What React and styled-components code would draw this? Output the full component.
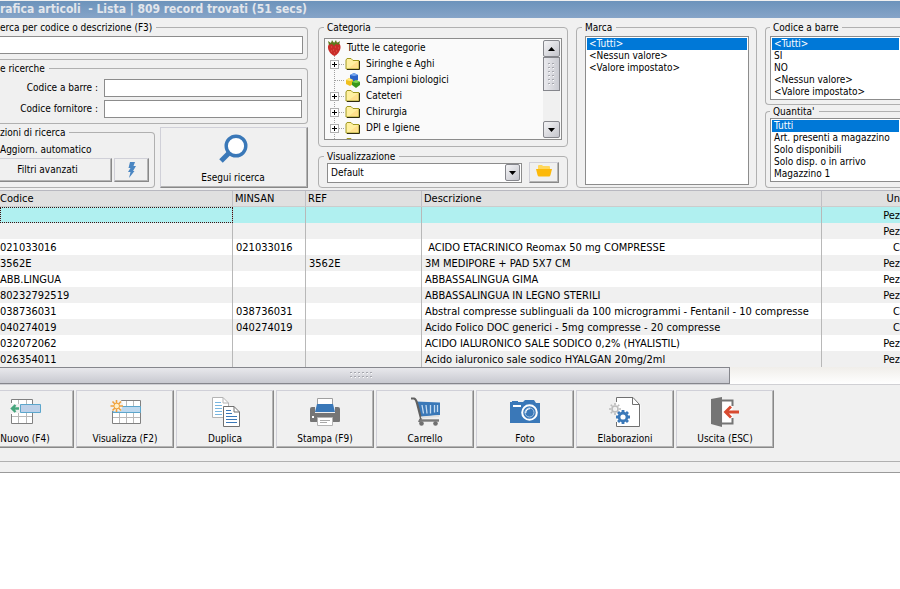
import styled, { createGlobalStyle } from 'styled-components'

const GlobalStyle = createGlobalStyle`
    * {
        box-sizing: border-box;
    }

    body {
        margin: 0;
        background-color: #ffffff;
        color: #000000;
        font-family: Tahoma, 'DejaVu Sans Condensed', 'DejaVu Sans', sans-serif;
        font-size: 10px;
        line-height: 14px;
    }

    button, input, select {
        margin: 0;
        font: inherit;
        color: inherit;
        border-radius: 0;
    }

    svg {
        display: block;
        flex: none;
    }
`

const Window = styled.div`
    overflow: hidden;
    background-color: #f0f0f0;
    border-bottom: 1px solid #9a9a9a;
    white-space: nowrap;
`

const TitleBar = styled.h1`
    margin: 1px 0 0;
    height: 17px;
    background: linear-gradient(#6c93bb, #86a4c8);
    color: #e2e6ec;
    font-size: 12px;
    font-weight: bold;
    line-height: 16px;
    white-space: pre;
`

const Filters = styled.div`
    display: flex;
    gap: 8px;
    padding: 4px 0 2px;
`

const Column = styled.div`
    display: flex;
    flex-direction: column;
    justify-content: space-between;
    flex: ${({ $width }) => ($width ? `0 0 ${$width}px` : '1 1 0')};
    min-width: 0;
`

const SearchColumn = styled(Column)`
    padding-right: 2px;
`

const Group = styled.fieldset`
    margin: 0;
    min-width: 0;
    padding: ${({ $pad }) => $pad};
    border: 1px solid #b0b0b0;
    border-left-width: ${({ $open }) => ($open === 'left' ? 0 : '1px')};
    border-right-width: ${({ $open }) => ($open === 'right' ? 0 : '1px')};
    border-radius: ${({ $open }) => ({ left: '0 4px 4px 0', right: '4px 0 0 4px' })[$open] || '4px'};
`

const Legend = styled.legend`
    padding: 0 4px 0 ${({ $flush }) => ($flush ? 0 : '3px')};
    line-height: 11px;
`

const Inset = styled.div`
    padding: 0 3px;
`

const TextInput = styled.input`
    display: block;
    flex: 1;
    width: 100%;
    min-width: 0;
    height: 18px;
    padding: 0 4px;
    border: 1px solid #8c8c8c;
    border-left-width: ${({ $open }) => ($open ? 0 : '1px')};
    background-color: #ffffff;
    outline: none;
`

const Field = styled.div`
    display: flex;
    align-items: center;

    & + & {
        margin-top: 3px;
    }
`

const FieldLabel = styled.label`
    width: 104px;
    padding-right: 6px;
    text-align: right;
`

const SearchRow = styled.div`
    display: flex;
    gap: 5px;
`

const Options = styled.div`
    flex: 0 0 155px;
`

const OptionText = styled.div`
    height: 15px;
`

const Button = styled.button`
    display: flex;
    align-items: center;
    justify-content: center;
    padding: 0;
    border: 1px solid;
    border-color: #d0d0d8 #888888 #888888 #d0d0d8;
    box-shadow: inset -1px -1px #b4b4b4;
    background-color: #f0f0f0;
`

const OptionButtons = styled.div`
    display: flex;
    gap: 2px;
`

const FilterButton = styled(Button)`
    width: ${({ $width }) => $width}px;
    height: 24px;
    padding-right: ${({ $shift }) => ($shift ? '16px' : 0)};
    border-left-width: ${({ $shift }) => ($shift ? 0 : '1px')};
`

const SearchButton = styled(Button)`
    flex: 1;
    flex-direction: column;
    justify-content: space-between;
    padding: 6px 2px 2px 0;
`

const Tree = styled.div`
    display: flex;
    height: 102px;
    padding: 1px;
    border: 1px solid #8c8c8c;
    background-color: #fafafa;
    overflow: hidden;
`

const TreeList = styled.ul`
    flex: 1;
    margin: 0;
    padding: 0;
    list-style: none;
`

const TreeItem = styled.li`
    display: flex;
    align-items: center;
    height: 16px;
    padding-left: ${({ $root }) => ($root ? '1px' : 0)};
`

const TreeText = styled.span`
    margin-left: 5px;
    line-height: 16px;
`

const ScrollBar = styled.div`
    display: flex;
    flex-direction: column;
    width: 17px;
    background-color: #f0f0f0;
`

const ScrollButton = styled.button`
    display: flex;
    align-items: center;
    justify-content: center;
    width: ${({ $width }) => $width || 17}px;
    height: 17px;
    padding: 0;
    border: 1px solid #85868c;
    border-radius: 2px;
    background: linear-gradient(135deg, #f4f4f6, #c4c5cc);
`

const ScrollThumb = styled.div`
    display: flex;
    align-items: center;
    justify-content: center;
    height: 34px;
    margin-bottom: auto;
    border: 1px solid #85868c;
    background: linear-gradient(90deg, #eaeaee, #cacbd2);
`

const ViewRow = styled.div`
    display: flex;
    align-items: center;
    gap: 7px;
`

const Combo = styled.div`
    display: flex;
    align-items: center;
    flex: 1;
    height: 20px;
    padding-right: 1px;
    border: 1px solid #8c8c8c;
    background-color: #ffffff;
`

const ComboSelect = styled.select`
    flex: 1;
    appearance: none;
    height: 18px;
    padding: 0 3px;
    border: 0;
    background-color: transparent;
    outline: none;
`

const FolderButton = styled(Button)`
    width: 30px;
    height: 21px;
`

const ListBox = styled.select`
    display: block;
    width: 100%;
    height: ${({ $height }) => $height}px;
    padding: 1px;
    border: 1px solid #8c8c8c;
    border-right-width: ${({ $open }) => ($open ? 0 : '1px')};
    background-color: #ffffff;
    outline: none;
    overflow: hidden;

    & option {
        height: 12px;
        min-height: 12px;
        padding: 0 2px;
        line-height: 12px;
    }

    & option:checked {
        background: linear-gradient(#0078d7, #0078d7);
        -webkit-text-fill-color: #ffffff;
    }
`

const Grid = styled.table`
    width: 100%;
    table-layout: fixed;
    border-collapse: separate;
    border-spacing: 0;
    border-top: 1px solid #b8b8c0;
    font-size: 11px;
`

const HeadCell = styled.th`
    height: 16px;
    padding: 1px 0 0 ${({ $first }) => ($first ? 0 : '2px')};
    border-right: 1px solid #c0c0c4;
    border-bottom: 1px solid #cccccc;
    background-color: #e0e0e0;
    font-weight: normal;
    line-height: 14px;
    text-align: left;

    &:last-child {
        border-right: 0;
        text-align: right;
    }
`

const Row = styled.tr`
    background-color: ${({ $selected }) => ($selected ? '#b0f0f0' : '#ffffff')};

    &:nth-child(even) {
        background-color: #f0f0f0;
    }
`

const Cell = styled.td`
    height: 16px;
    padding: 2px 0 0 ${({ $first }) => ($first ? 0 : '3px')};
    border-right: 1px solid #b8b8b8;
    line-height: 14px;
    white-space: pre;
    overflow: hidden;
    outline: ${({ $focused }) => ($focused ? '1px dotted #401010' : 'none')};
    outline-offset: -1px;

    &:last-child {
        border-right: 0;
        text-align: right;
    }
`

const HorizontalScroll = styled.div`
    height: 18px;
    border-bottom: 1px solid #d0d0d4;
    background: linear-gradient(#f0eeea, #ffffff);
`

const HorizontalThumb = styled.div`
    display: flex;
    align-items: center;
    justify-content: center;
    width: 730px;
    height: 17px;
    padding-right: 6px;
    border: 1px solid #85868c;
    border-left: 0;
    background: linear-gradient(#e8e8ec, #c8c9d0);
`

const ToolBar = styled.div`
    display: flex;
    gap: 2px;
    margin-left: -24px;
    padding: 5px 0 13px;
`

const ToolButton = styled(Button)`
    flex: 0 0 98px;
    flex-direction: column;
    justify-content: space-between;
    height: 58px;
    padding: 4px 0 1px;
`

const StatusBar = styled.div`
    height: 11px;
    border-top: 1px solid #b0b0b0;
`

const Magnifier = () => (
    <svg width="30" height="30" viewBox="0 0 30 30">
        <path d="M12 18 3 27" stroke="#3a78b8" strokeWidth="5" />
        <circle cx="18" cy="12" r="9.8" fill="#fff" stroke="#3a78b8" strokeWidth="3.4" />
    </svg>
)

const Bolt = () => (
    <svg width="10" height="16" viewBox="0 0 10 16">
        <path d="M3 0 8 0 6.5 4 9 4 6 9 7.5 9 2 16 3.5 10 1 10 3.5 6 1.5 6Z" fill="#4a86c2" />
    </svg>
)

const Strawberry = () => (
    <svg width="15" height="16" viewBox="0 0 15 16">
        <path d="M7.5 3C11 1.5 14 4 13.5 8 12.8 12 10 15 7.5 16 5 15 1.5 12 1 8 .7 4 4 1.5 7.5 3Z" fill="#c92c28" />
        <path d="M2 5 1 1 4 3 5 0 7 3 9 0 10 3 13 1 12 5 9 4 7 6 5 4Z" fill="#5c7a1c" />
        <path d="M4 7h1M8 7h1M11 8h1M6 10h1M9 11h1M4 11h1M7 13h1" stroke="#e06050" />
    </svg>
)

const Folder = () => (
    <svg width="16" height="14" viewBox="0 0 16 14">
        <path d="M1 12V3L2 1.5H6L8 3.5H14V12Z" fill="#fff0a0" stroke="#a09820" />
        <path d="M4 11 13 4V11Z" fill="#ffe08c" />
        <path d="M2 12.5H14.5V4" fill="none" stroke="#302c10" />
    </svg>
)

const Cubes = () => (
    <svg width="16" height="15" viewBox="0 0 16 15">
        <path d="M5 2 9 0 13 2V7L9 9 5 7Z" fill="#2a62c8" />
        <path d="M5 2 9 0 13 2 9 3Z" fill="#78a8f0" />
        <path d="M1 7 4 5 8 7V11L5 13 1 11Z" fill="#f0c020" />
        <path d="M1 7 4 5 8 7 5 8Z" fill="#ffe880" />
        <path d="M7 9 11 7 15 9V12L11 15 7 12Z" fill="#38961c" />
        <path d="M7 9 11 7 15 9 11 10Z" fill="#80d850" />
    </svg>
)

const Branch = ({ expandable }) => (
    <svg width="19" height="16" viewBox="0 0 19 16">
        <path d="M8.5 0V16M9 8.5H18" stroke="#a0a0a0" strokeDasharray="1 1" />
        {expandable && (
            <>
                <rect x="4.5" y="4.5" width="8" height="8" fill="#fff" stroke="#b0b0b0" />
                <path d="M6 8.5H11M8.5 6V11" stroke="#000" />
            </>
        )}
    </svg>
)

const Arrow = ({ up }) => (
    <svg width="7" height="4" viewBox="0 0 7 4">
        <path d={up ? 'M0 4 3.5 0 7 4Z' : 'M0 0 3.5 4 7 0Z'} />
    </svg>
)

const Grip = ({ columns, rows }) => (
    <svg width={columns * 4 - 1} height={rows * 4 - 1}>
        {Array.from({ length: columns * rows }, (_, i) => {
            const x = (i % columns) * 4
            const y = Math.floor(i / columns) * 4
            return (
                <g key={i}>
                    <rect x={x + 1} y={y + 1} width="1" height="1" fill="#fff" />
                    <rect x={x} y={y} width="2" height="1" fill="#a6a7ae" />
                </g>
            )
        })}
    </svg>
)

const YellowFolder = () => (
    <svg width="16" height="15" viewBox="0 0 16 15">
        <path d="M2 5V1Q2 0 3 0H6L7 1H13Q14 1 14 2V5Z" fill="#ffd75c" />
        <path d="M0 4H16L14.5 10Q14 11.5 13 11.5H3Q2 11.5 1.5 10Z" fill="#fcb90a" />
    </svg>
)

const NewRow = () => (
    <svg width="32" height="32" viewBox="0 0 32 32">
        <path d="M2.5 4.5H24V28.5H2.5Z" fill="#fff" />
        <path d="M9.5 4V29M17.5 4V29M2 21.5H24" stroke="#b8b8b8" />
        <path d="M2.5 8V4.5H23.5V28.5H2.5V19" fill="none" stroke="#808080" />
        <path d="M1 9H12V18H1Z" fill="#f0f0f0" />
        <path d="M10 13.5H4M6.5 10 3 13.5 6.5 17" fill="none" stroke="#45a57c" strokeWidth="2.4" />
        <path d="M11.5 9.5H31.5V17.5H11.5Z" fill="#bdd0e8" stroke="#5ca6cc" />
    </svg>
)

const ViewRowIcon = () => (
    <svg width="32" height="32" viewBox="0 0 32 32">
        <path d="M3.5 5.5H31.5V28.5H3.5Z" fill="#fff" stroke="#808080" />
        <path d="M10.5 6V28M17.5 6V28M24.5 6V28M4 22.5H31" stroke="#b8b8b8" />
        <path d="M4 11.5H31.5V17.5H4Z" fill="#bdd8ee" stroke="#5ca6cc" />
        <path d="M1 5H12L14 9 12 16H3Z" fill="#f0f0f0" />
        <path d="M7.5 5V17M1.5 11H14M3.5 6.5 12 15.5M12 6.5 3.5 15.5" stroke="#f0a23c" strokeWidth="1.6" />
        <circle cx="7.7" cy="11" r="2.8" fill="#fff0c8" stroke="#f0a23c" />
    </svg>
)

const Copy = () => (
    <svg width="32" height="32" viewBox="0 0 32 32">
        <path d="M3.5 2.5H14L19.5 8V22.5H3.5Z" fill="#fff" stroke="#b4b4b4" />
        <path d="M14 2.5V8H19.5" fill="none" stroke="#b4b4b4" />
        <path d="M6 7.5H12M6 10.5H13M6 13.5H13M6 16.5H13M6 19.5H13" stroke="#78b6e0" />
        <path d="M14.5 11.5H25L30.5 17V31.5H14.5Z" fill="#fff" stroke="#707070" />
        <path d="M25 11.5V17H30.5" fill="none" stroke="#707070" />
        <path d="M17 15.5H22M17 18.5H23M17 21.5H28M17 24.5H28M17 27.5H28" stroke="#3a78b8" />
    </svg>
)

const Printer = () => (
    <svg width="32" height="32" viewBox="0 0 32 32">
        <path d="M1 14Q1 12 3 12H6V18H26V12H29Q31 12 31 14V26Q31 27 30 27H2Q1 27 1 26Z" fill="#757575" />
        <path d="M8.5 9V3.5H23.5V9" fill="#fff" stroke="#a0a0a0" />
        <path d="M8 9H24L26 17H6Z" fill="#3a78b8" />
        <path d="M8.5 22.5H23.5V30.5H8.5Z" fill="#fff" stroke="#b4b4b4" />
        <path d="M11 25.5H21M11 27.5H18" stroke="#a8a8a8" />
        <path d="M3 21H5V23H3Z" fill="#fff" />
    </svg>
)

const Cart = () => (
    <svg width="32" height="32" viewBox="0 0 32 32">
        <path d="M7 6.5 31 7.5V20L12 22Z" fill="#3a78b8" />
        <path d="M13 10 14.5 18.5M17 10 18 18.5M21.5 10V18.5M25.5 10V17.5M28.5 10V17" stroke="#c4daf0" strokeWidth="1.3" />
        <path d="M2 3.5H5Q7 4 8 8L12 23.5 10 27" fill="none" stroke="#606060" strokeWidth="2.2" />
        <path d="M12 22.5 30 21" stroke="#e0e0e0" strokeWidth="2" />
        <path d="M10 25.5H30" stroke="#787878" strokeWidth="2.4" />
        <circle cx="12.5" cy="28.5" r="2.3" fill="#707070" />
        <circle cx="26.5" cy="28.5" r="2.3" fill="#707070" />
    </svg>
)

const Camera = () => (
    <svg width="32" height="32" viewBox="0 0 32 32">
        <path d="M1 7H3V6H9V7H14L16 5H25L27 8H31V28H1Z" fill="#3a78b8" />
        <circle cx="20.5" cy="17.5" r="7.3" fill="#3a78b8" stroke="#fff" strokeWidth="2" />
        <path d="M16.5 18A4.2 4.2 0 0 1 21 13.5" fill="none" stroke="#fff" strokeWidth="1.6" />
        <circle cx="20.5" cy="17.5" r="4.5" fill="none" stroke="#a8c6e4" strokeWidth="1" />
        <path d="M4 11H12" stroke="#fff" strokeWidth="2" />
    </svg>
)

const Gear = ({ x, y, r, color, width }) => (
    <g stroke={color} fill="none" strokeWidth={width}>
        <circle cx={x} cy={y} r={r} />
        {[0, 45, 90, 135, 180, 225, 270, 315].map((angle) => (
            <path key={angle} d={`M${x} ${y - r - 1}v-2`} transform={`rotate(${angle} ${x} ${y})`} />
        ))}
    </g>
)

const PageGears = () => (
    <svg width="32" height="32" viewBox="0 0 32 32">
        <path d="M7.5 2.5H24L31.5 9.5V31.5H7.5Z" fill="#fff" />
        <path d="M7.5 7V2.5H24L30.5 9.5V31.5H7.5V27" fill="none" stroke="#707070" />
        <path d="M23.5 2.5V9.5H30.5" fill="none" stroke="#707070" />
        <Gear x={6} y={14} r={3} color="#bcbcbc" width={1.6} />
        <Gear x={14} y={22} r={4} color="#3a78b8" width={2.8} />
    </svg>
)

const Exit = () => (
    <svg width="32" height="32" viewBox="0 0 32 32">
        <path d="M13.5 5.5H23.5V28.5H13.5Z" fill="#fff" />
        <path d="M13 5.5H23.5V11M23.5 23V28.5H13" fill="none" stroke="#757575" strokeWidth="2" />
        <path d="M2 4 13 2V32L2 29Z" fill="#757575" />
        <path d="M30 17H17M22 11.5 16.5 17 22 22.5" fill="none" stroke="#d84a30" strokeWidth="2.8" />
    </svg>
)

const categories = [
    { name: 'Siringhe e Aghi', expandable: true },
    { name: 'Campioni biologici' },
    { name: 'Cateteri', expandable: true },
    { name: 'Chirurgia', expandable: true },
    { name: 'DPI e Igiene', expandable: true },
    { name: '', expandable: true }
]

const brands = ['<Tutti>', '<Nessun valore>', '<Valore impostato>']
const barcodes = ['<Tutti>', 'SI', 'NO', '<Nessun valore>', '<Valore impostato>']
const quantities = ['Tutti', 'Art. presenti a magazzino', 'Solo disponibili', 'Solo disp. o in arrivo', 'Magazzino 1']

const headers = ['Codice', 'MINSAN', 'REF', 'Descrizione', 'Un']

const items = [
    ['', '', '', '', 'Pez'],
    ['', '', '', '', 'Pez'],
    ['021033016', '021033016', '', ' ACIDO ETACRINICO Reomax 50 mg COMPRESSE', 'C'],
    ['3562E', '', '3562E', '3M MEDIPORE + PAD 5X7 CM', 'Pez'],
    ['ABB.LINGUA', '', '', 'ABBASSALINGUA GIMA', 'Pez'],
    ['80232792519', '', '', 'ABBASSALINGUA IN LEGNO STERILI', 'Pez'],
    ['038736031', '038736031', '', 'Abstral compresse sublinguali da 100 microgrammi - Fentanil - 10 compresse', 'C'],
    ['040274019', '040274019', '', 'Acido Folico DOC generici - 5mg compresse - 20 compresse', 'C'],
    ['032072062', '', '', 'ACIDO IALURONICO SALE SODICO 0,2% (HYALISTIL)', 'Pez'],
    ['026354011', '', '', 'Acido ialuronico sale sodico HYALGAN 20mg/2ml', 'Pez']
]

const actions = [
    { label: 'Nuovo (F4)', Icon: NewRow },
    { label: 'Visualizza (F2)', Icon: ViewRowIcon },
    { label: 'Duplica', Icon: Copy },
    { label: 'Stampa (F9)', Icon: Printer },
    { label: 'Carrello', Icon: Cart },
    { label: 'Foto', Icon: Camera },
    { label: 'Elaborazioni', Icon: PageGears },
    { label: 'Uscita (ESC)', Icon: Exit }
]

const ValueList = ({ label, values, height, open }) => (
    <ListBox size={values.length} aria-label={label} defaultValue={values[0]} $height={height} $open={open}>
        {values.map((value) => (
            <option key={value} value={value}>{value}</option>
        ))}
    </ListBox>
)

const SearchPanel = () => (
    <SearchColumn $width={310}>
        <Group $open="left" $pad="3px 4px 5px 0">
            <Legend $flush>erca per codice o descrizione (F3)</Legend>
            <TextInput $open aria-label="Ricerca per codice o descrizione" />
        </Group>
        <Group $open="left" $pad="5px 5px 5px 0">
            <Legend $flush>e ricerche</Legend>
            <Field>
                <FieldLabel htmlFor="barcode">Codice a barre :</FieldLabel>
                <TextInput id="barcode" />
            </Field>
            <Field>
                <FieldLabel htmlFor="supplier">Codice fornitore :</FieldLabel>
                <TextInput id="supplier" />
            </Field>
        </Group>
        <SearchRow>
            <Options>
                <Group $open="left" $pad="5px 5px 5px 0">
                    <Legend $flush>zioni di ricerca</Legend>
                    <OptionText>Aggiorn. automatico</OptionText>
                    <OptionButtons>
                        <FilterButton $width={112} $shift>Filtri avanzati</FilterButton>
                        <FilterButton $width={35} aria-label="Filtro rapido"><Bolt /></FilterButton>
                    </OptionButtons>
                </Group>
            </Options>
            <SearchButton>
                <Magnifier />
                Esegui ricerca
            </SearchButton>
        </SearchRow>
    </SearchColumn>
)

const CategoryPanel = () => (
    <Column $width={250}>
        <Group $pad="5px 5px 6px">
            <Legend>Categoria</Legend>
            <Tree>
                <TreeList>
                    <TreeItem $root><Strawberry /><TreeText>Tutte le categorie</TreeText></TreeItem>
                    {categories.map(({ name, expandable }) => (
                        <TreeItem key={name}>
                            <Branch expandable={expandable} />
                            {expandable ? <Folder /> : <Cubes />}
                            <TreeText>{name}</TreeText>
                        </TreeItem>
                    ))}
                </TreeList>
                <ScrollBar>
                    <ScrollButton aria-label="Su"><Arrow up /></ScrollButton>
                    <ScrollThumb><Grip columns={2} rows={6} /></ScrollThumb>
                    <ScrollButton aria-label="Giù"><Arrow /></ScrollButton>
                </ScrollBar>
            </Tree>
        </Group>
        <Group $pad="0 5px 4px">
            <Legend>Visualizzazione</Legend>
            <Inset>
                <ViewRow>
                    <Combo>
                        <ComboSelect aria-label="Visualizzazione">
                            <option>Default</option>
                        </ComboSelect>
                        <ScrollButton $width={15} tabIndex={-1} aria-label="Apri elenco"><Arrow /></ScrollButton>
                    </Combo>
                    <FolderButton aria-label="Apri visualizzazione"><YellowFolder /></FolderButton>
                </ViewRow>
            </Inset>
        </Group>
    </Column>
)

const App = () => {
    return (
        <>
            <GlobalStyle />
            <Window>
                <TitleBar>{'rafica articoli  - Lista | 809 record trovati (51 secs)'}</TitleBar>
                <Filters>
                    <SearchPanel />
                    <CategoryPanel />
                    <Column $width={181}>
                        <Group $pad="3px 4px 2px 5px">
                            <Legend>Marca</Legend>
                            <Inset>
                                <ValueList label="Marca" values={brands} height={149} />
                            </Inset>
                        </Group>
                    </Column>
                    <Column>
                        <Group $open="right" $pad="3px 0 4px 4px">
                            <Legend>Codice a barre</Legend>
                            <ValueList label="Codice a barre" values={barcodes} height={64} open />
                        </Group>
                        <Group $open="right" $pad="1px 0 5px 4px">
                            <Legend>Quantita'</Legend>
                            <ValueList label="Quantita'" values={quantities} height={64} open />
                        </Group>
                    </Column>
                </Filters>
                <Grid>
                    <colgroup>
                        <col width="233" />
                        <col width="73" />
                        <col width="116" />
                        <col width="400" />
                        <col />
                    </colgroup>
                    <thead>
                        <tr>
                            {headers.map((header, i) => (
                                <HeadCell key={header} $first={i === 0}>{header}</HeadCell>
                            ))}
                        </tr>
                    </thead>
                    <tbody>
                        {items.map((item, row) => (
                            <Row key={row} $selected={row === 0}>
                                {item.map((value, i) => (
                                    <Cell key={i} $first={i === 0} $focused={row === 0 && i === 0}>{value}</Cell>
                                ))}
                            </Row>
                        ))}
                    </tbody>
                </Grid>
                <HorizontalScroll>
                    <HorizontalThumb><Grip columns={6} rows={2} /></HorizontalThumb>
                </HorizontalScroll>
                <ToolBar>
                    {actions.map(({ label, Icon }) => (
                        <ToolButton key={label}>
                            <Icon />
                            {label}
                        </ToolButton>
                    ))}
                </ToolBar>
                <StatusBar />
            </Window>
        </>
    )
}

export default App
